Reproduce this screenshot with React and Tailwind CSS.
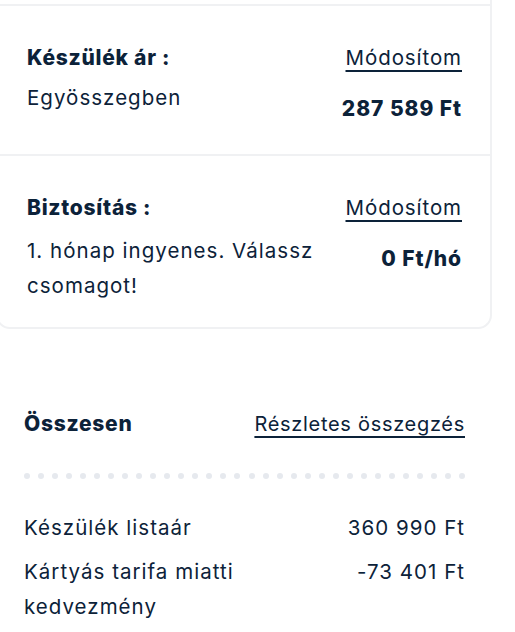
import React from "react"

const ink = "text-[#0c2239]"

function PriceSection({ title, desc, price, className = "", descGap = "mt-2" }) {
  return (
    <div className={`flex justify-between pl-[29px] pr-[28px] pt-[38px] ${className}`}>
      <div className="flex flex-col">
        <div className="text-[21px] leading-7 font-extrabold tracking-[0.035em]">{title}</div>
        <div className={`${descGap} w-[310px] text-[20.5px] leading-[35px] tracking-[0.05em]`}>{desc}</div>
      </div>
      <div className="flex flex-col items-end">
        <a href="#" className="text-[20.5px] leading-7 tracking-[0.045em] underline underline-offset-[5px] decoration-2">
          Módosítom
        </a>
        <div className="mt-[23px] text-[21px] leading-7 font-extrabold tracking-[0.045em] whitespace-nowrap">{price}</div>
      </div>
    </div>
  )
}

export default function App() {
  const dots = Array.from({ length: 32 })

  return (
    <div className={`min-h-screen bg-white font-['Inter','Noto_Sans',sans-serif] ${ink}`}>
      {/* card, top part scrolled out of view */}
      <div className="ml-[-4px] w-[496px] border-2 border-t-0 border-[#f0f1f3] rounded-b-[14px] divide-y-2 divide-[#f0f1f3]">
        <div className="h-[6px]" />
        <PriceSection
          title="Készülék ár :"
          desc="Egyösszegben"
          price="287 589 Ft"
          className="pb-[31px]"
        />
        <PriceSection
          title="Biztosítás :"
          desc="1. hónap ingyenes. Válassz csomagot!"
          price="0 Ft/hó"
          descGap="mt-[11px]"
          className="pb-[24px]"
        />
      </div>

      {/* summary */}
      <div className="pl-6 pr-[50px] pt-[81px]">
        <div className="flex justify-between items-center">
          <div className="text-[21px] leading-7 font-extrabold tracking-[0.035em]">Összesen</div>
          <a href="#" className="text-[20px] leading-7 tracking-[0.035em] underline underline-offset-[5px] decoration-2">
            Részletes összegzés
          </a>
        </div>

        <div className="mt-[35px] flex justify-between">
          {dots.map((_, i) => (
            <span key={i} className="block w-[6px] h-[6px] rounded-full bg-[#e6e9ee]" />
          ))}
        </div>

        <div className="mt-[31px] flex flex-col gap-[9px] text-[20.5px] leading-[35px] tracking-[0.05em]">
          <div className="flex justify-between">
            <span>Készülék listaár</span>
            <span>360 990 Ft</span>
          </div>
          <div className="flex justify-between">
            <span className="w-[260px]">Kártyás tarifa miatti kedvezmény</span>
            <span>-73 401 Ft</span>
          </div>
        </div>
      </div>
    </div>
  )
}
